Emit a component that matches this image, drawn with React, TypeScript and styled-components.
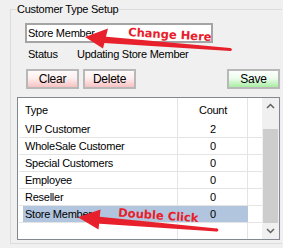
import React from "react";
import styled, { createGlobalStyle } from "styled-components";

const Global = createGlobalStyle`
  html, body { margin: 0; padding: 0; background: #f0f0f0; overflow: hidden; }
  body { width: 283px; height: 248px; font-family: "Liberation Sans", Arial, sans-serif; font-size: 11px; letter-spacing: -0.25px; color: #000; }
`;

const Page = styled.div`
  position: relative;
  width: 283px;
  height: 248px;
  padding: 9px 0 0 10px;
  box-sizing: border-box;
`;

const Group = styled.div`
  width: 272px;
  border: 1px solid #dcdcdc;
  border-right: none;
  box-sizing: border-box;
  padding: 0 2px 3px 0;
  display: flex;
  flex-direction: column;
`;

const Title = styled.span`
  align-self: flex-start;
  margin: -7px 0 0 5px;
  padding: 0 1px;
  line-height: 13px;
  background: #f0f0f0;
`;

const TextBox = styled.div`
  margin: 7px 0 0 14px;
  width: 188px;
  height: 20px;
  box-sizing: border-box;
  border: 2px solid #a4a4a4;
  background: #fff;
  padding: 0 0 0 1px;
  line-height: 16px;
`;

const StatusRow = styled.div`
  display: grid;
  grid-template-columns: 49px auto;
  margin: 4px 0 0 17px;
  line-height: 14px;
`;

const ButtonRow = styled.div`
  display: flex;
  gap: 4px;
  margin: 8px 0 0 15px;
`;

const Button = styled.div<{ $tone: "red" | "green"; $push?: boolean }>`
  width: 53px;
  height: 20px;
  box-sizing: border-box;
  border: 2px solid #b8b8b8;
  margin-left: ${(p) => (p.$push ? "auto" : "0")};
  background: ${(p) =>
    p.$tone === "red"
      ? "linear-gradient(#fffafa 0%, #fdeeee 45%, #f7c2c2 100%)"
      : "linear-gradient(#fbfffb 0%, #eefcee 45%, #a9eda3 100%)"};
  display: flex;
  align-items: center;
  justify-content: center;
  line-height: 14px;
  font-size: 12px;
`;

const List = styled.div`
  margin: 8px 0 0 6px;
  height: 143px;
  box-sizing: border-box;
  border: 1px solid #828790;
  background: #fff;
  display: flex;
  overflow: hidden;
`;

const Table = styled.div`
  flex: 1;
  display: flex;
  flex-direction: column;
  padding-left: 1px;
  background:
    linear-gradient(#e4e4e4, #e4e4e4) 159px 0 / 1px 100% no-repeat,
    linear-gradient(#e4e4e4, #e4e4e4) 229px 0 / 1px 100% no-repeat;
`;

const Row = styled.div<{ $header?: boolean; $selected?: boolean }>`
  display: grid;
  grid-template-columns: 159px 70px 1fr;
  height: ${(p) => (p.$header ? "23px" : "17px")};
  box-sizing: border-box;
  border-bottom: ${(p) => (p.$header ? "none" : "1px solid #e4e4e4")};
  align-items: center;
  line-height: 14px;
  background: ${(p) =>
    p.$selected ? "linear-gradient(90deg, transparent 4px, #b1c5de 4px)" : "transparent"};
  background-size: 229px 100%;
  background-repeat: no-repeat;
`;

const TypeCell = styled.span`
  padding-left: 6px;
  white-space: nowrap;
`;

const CountCell = styled.span`
  text-align: center;
`;

const ScrollBar = styled.div`
  width: 17px;
  background: #f0f0f0;
  display: flex;
  flex-direction: column;
  align-items: center;
`;

const Arrow = styled.div`
  height: 17px;
  width: 100%;
  display: flex;
  align-items: center;
  justify-content: center;
`;

const Thumb = styled.div`
  width: 15px;
  height: 97px;
  margin-top: 15px;
  background: #cdcdcd;
`;

const Spacer = styled.div`
  flex: 1;
`;

const Overlay = styled.svg`
  position: absolute;
  left: 0;
  top: 0;
  pointer-events: none;
`;

const AnnotText = styled.text`
  font-family: "DejaVu Sans", Verdana, sans-serif;
  font-weight: bold;
  font-size: 11.5px;
  letter-spacing: 0;
  fill: #e8202b;
`;

const rows = [
  { type: "VIP Customer", count: 2 },
  { type: "WholeSale Customer", count: 0 },
  { type: "Special Customers", count: 0 },
  { type: "Employee", count: 0 },
  { type: "Reseller", count: 0 },
  { type: "Store Member", count: 0, selected: true },
];

const Chevron = ({ up }: { up?: boolean }) => (
  <svg width="9" height="6" viewBox="0 0 9 6">
    <polyline
      points={up ? "1,5 4.5,1.5 8,5" : "1,1 4.5,4.5 8,1"}
      fill="none"
      stroke="#606060"
      strokeWidth="1.5"
    />
  </svg>
);

export default function App() {
  return (
    <>
      <Global />
      <Page>
        <Group>
          <Title>Customer Type Setup</Title>
          <TextBox>Store Member</TextBox>
          <StatusRow>
            <span>Status</span>
            <span>Updating Store Member</span>
          </StatusRow>
          <ButtonRow>
            <Button $tone="red">Clear</Button>
            <Button $tone="red">Delete</Button>
            <Button $tone="green" $push>
              Save
            </Button>
          </ButtonRow>
          <List>
            <Table>
              <Row $header>
                <TypeCell>Type</TypeCell>
                <CountCell>Count</CountCell>
              </Row>
              {rows.map((r) => (
                <Row key={r.type} $selected={r.selected}>
                  <TypeCell>{r.type}</TypeCell>
                  <CountCell>{r.count}</CountCell>
                </Row>
              ))}
            </Table>
            <ScrollBar>
              <Arrow>
                <Chevron up />
              </Arrow>
              <Thumb />
              <Spacer />
              <Arrow>
                <Chevron />
              </Arrow>
            </ScrollBar>
          </List>
        </Group>
        <Overlay width="283" height="248" viewBox="0 0 283 248">
          <AnnotText x="128" y="36" transform="rotate(3.4 128 36)">
            Change Here
          </AnnotText>
          <polygon points="85,37 108,28.5 103,48.5" fill="#e8202b" />
          <polygon points="104,36.5 230,48 230.5,51 104,43" fill="#e8202b" />
          <circle cx="230.2" cy="49.5" r="1.6" fill="#e8202b" />
          <AnnotText x="118" y="216.5" transform="rotate(4 118 216.5)">
            Double Click
          </AnnotText>
          <polygon points="78,217.3 100.5,209.5 98.5,229.5" fill="#e8202b" />
          <polygon points="97,216.5 217,228.5 216.5,231.5 96,223.5" fill="#e8202b" />
          <circle cx="216.8" cy="230" r="1.6" fill="#e8202b" />
        </Overlay>
      </Page>
    </>
  );
}
